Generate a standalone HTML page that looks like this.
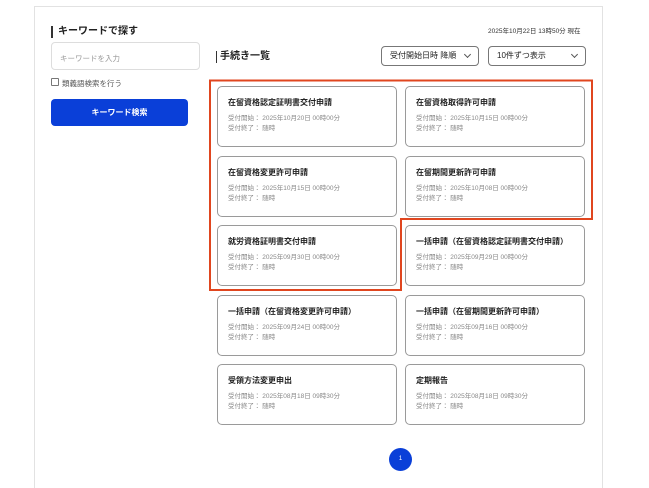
<!DOCTYPE html>
<html><head><meta charset="utf-8"><style>
*{box-sizing:border-box;margin:0;padding:0}
html,body{width:649px;height:488px;overflow:hidden}
body{background:#fff;font-family:"Liberation Sans","Noto Sans CJK JP",sans-serif;position:relative;color:#222}
.abs{position:absolute}
.wrap{left:34px;top:6px;width:569px;height:482px;border:1px solid #e2e2e2;border-bottom:none}
.h{font-size:10px;font-weight:bold;border-left:2px solid #333;padding-left:5px;line-height:12px}
.card{position:absolute;width:180px;height:61px;border:1px solid #9a9a9a;border-radius:5px;padding:10px 0 0 10px}
.card b{display:block;font-size:8px;margin-bottom:6px;white-space:nowrap}
.card p{font-size:6.5px;color:#888;line-height:10px;white-space:nowrap}
.sel{height:20px;top:46px;border:1px solid #777;border-radius:4px;font-size:8px;line-height:18px;padding-left:8px}
.sel:after{content:"";position:absolute;right:8px;top:5px;width:4px;height:4px;border-right:1px solid #555;border-bottom:1px solid #555;transform:rotate(45deg)}
</style></head><body>
<div class="abs wrap"></div>
<div class="abs h" style="left:51px;top:26px">キーワードで探す</div>
<div class="abs" style="left:51px;top:42px;width:149px;height:28px;border:1px solid #ddd;border-radius:4px;font-size:7.5px;color:#999;padding:10px 0 0 8px">キーワードを入力</div>
<div class="abs" style="left:51px;top:78px;width:8px;height:8px;border:1px solid #777;border-radius:1px"></div>
<div class="abs" style="left:62px;top:78px;font-size:7.5px;color:#555">類義語検索を行う</div>
<div class="abs" style="left:51px;top:99px;width:137px;height:27px;background:#0a3fd8;border-radius:4px;color:#fff;font-size:8px;font-weight:bold;text-align:center;line-height:27px">キーワード検索</div>
<div class="abs" style="left:488px;top:25px;font-size:6.5px;color:#333">2025年10月22日 13時50分 現在</div>
<div class="abs h" style="left:216px;top:51px;border-left-width:1px;padding-left:3px">手続き一覧</div>
<div class="abs sel" style="left:381px;width:98px">受付開始日時 降順</div>
<div class="abs sel" style="left:488px;width:98px">10件ずつ表示</div>

<div class="card" style="left:217px;top:86px"><b>在留資格認定証明書交付申請</b><p>受付開始： 2025年10月20日 00時00分</p><p>受付終了： 随時</p></div>
<div class="card" style="left:405px;top:86px"><b>在留資格取得許可申請</b><p>受付開始： 2025年10月15日 00時00分</p><p>受付終了： 随時</p></div>
<div class="card" style="left:217px;top:156px"><b>在留資格変更許可申請</b><p>受付開始： 2025年10月15日 00時00分</p><p>受付終了： 随時</p></div>
<div class="card" style="left:405px;top:156px"><b>在留期間更新許可申請</b><p>受付開始： 2025年10月08日 00時00分</p><p>受付終了： 随時</p></div>
<div class="card" style="left:217px;top:225px"><b>就労資格証明書交付申請</b><p>受付開始： 2025年09月30日 00時00分</p><p>受付終了： 随時</p></div>
<div class="card" style="left:405px;top:225px"><b>一括申請（在留資格認定証明書交付申請）</b><p>受付開始： 2025年09月29日 00時00分</p><p>受付終了： 随時</p></div>
<div class="card" style="left:217px;top:295px"><b>一括申請（在留資格変更許可申請）</b><p>受付開始： 2025年09月24日 00時00分</p><p>受付終了： 随時</p></div>
<div class="card" style="left:405px;top:295px"><b>一括申請（在留期間更新許可申請）</b><p>受付開始： 2025年09月16日 00時00分</p><p>受付終了： 随時</p></div>
<div class="card" style="left:217px;top:364px"><b>受領方法変更申出</b><p>受付開始： 2025年08月18日 09時30分</p><p>受付終了： 随時</p></div>
<div class="card" style="left:405px;top:364px"><b>定期報告</b><p>受付開始： 2025年08月18日 09時30分</p><p>受付終了： 随時</p></div>

<svg class="abs" style="left:0;top:0" width="649" height="488"><path d="M210 80.5H592V219H401V290H210Z" fill="none" stroke="#e0461f" stroke-width="2"/></svg>
<div class="abs" style="left:389px;top:448px;width:23px;height:23px;border-radius:50%;background:#0a3fd8;color:#fff;font-size:6px;text-align:center;line-height:23px">1</div>
</body></html>
